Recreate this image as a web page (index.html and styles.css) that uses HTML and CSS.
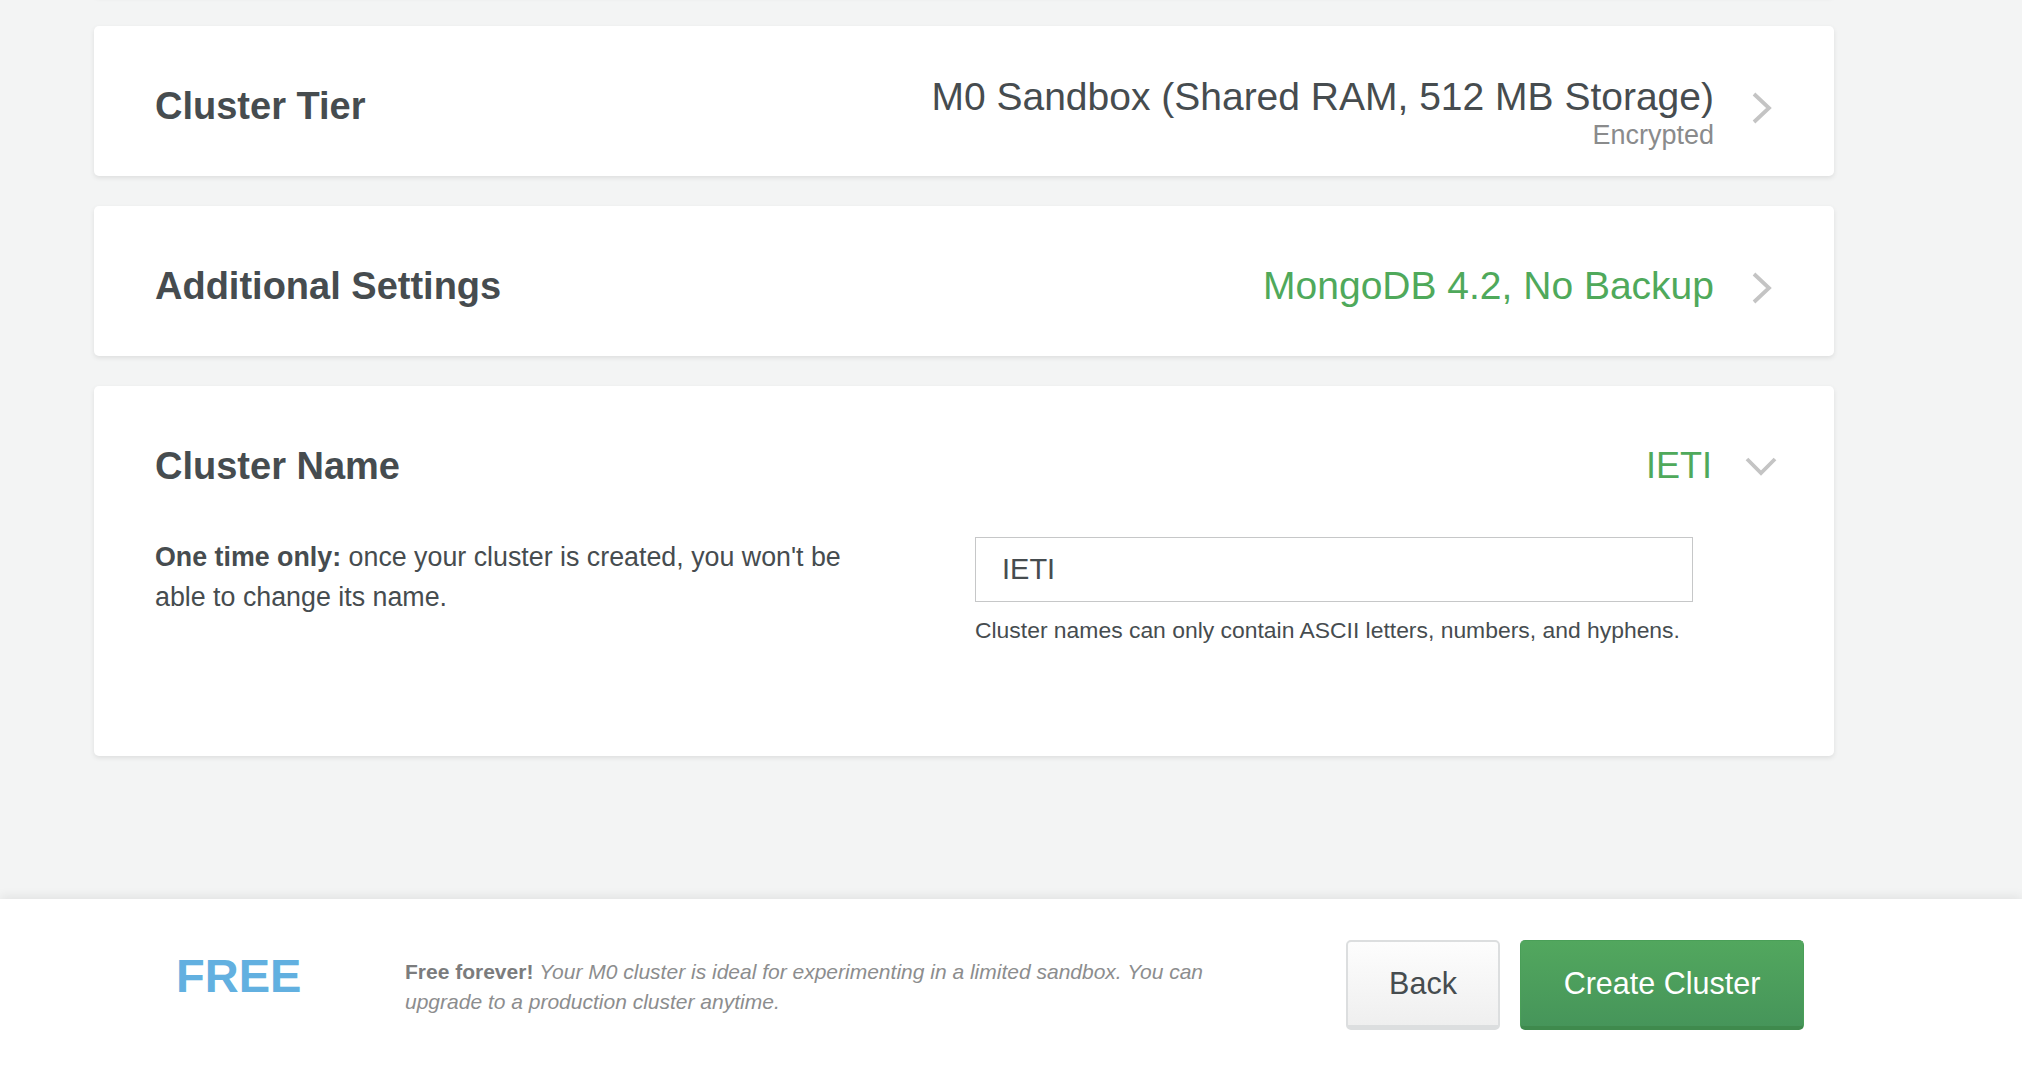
FILE: index.html
```html
<!DOCTYPE html>
<html lang="en">
<head>
<meta charset="utf-8">
<title>Create Cluster</title>
<link rel="stylesheet" href="styles.css">
</head>
<body>
<main class="content">
  <div class="card card-stub"></div>

  <section class="card">
    <div class="card-head">
      <h2 class="card-title">Cluster Tier</h2>
      <div class="value value-stack">
        <div class="value-main">M0 Sandbox (Shared RAM, 512 MB Storage)</div>
        <div class="value-sub">Encrypted</div>
      </div>
      <span class="chev chev-right">
        <svg width="22" height="34" viewBox="0 0 22 34"><polyline points="3,3 18,17 3,31" fill="none" stroke="#c4c4c4" stroke-width="3.8"/></svg>
      </span>
    </div>
  </section>

  <section class="card">
    <div class="card-head">
      <h2 class="card-title">Additional Settings</h2>
      <div class="value value-green">MongoDB 4.2, No Backup</div>
      <span class="chev chev-right">
        <svg width="22" height="34" viewBox="0 0 22 34"><polyline points="3,3 18,17 3,31" fill="none" stroke="#c4c4c4" stroke-width="3.8"/></svg>
      </span>
    </div>
  </section>

  <section class="card card-open">
    <div class="card-head">
      <h2 class="card-title">Cluster Name</h2>
      <div class="value value-green value-name">IETI</div>
      <span class="chev">
        <svg width="34" height="20" viewBox="0 0 34 20"><polyline points="3,3 17,17 31,3" fill="none" stroke="#c4c4c4" stroke-width="3.8"/></svg>
      </span>
    </div>
    <div class="card-body">
      <p class="note"><strong>One time only:</strong> once your cluster is created, you won't be able to change its name.</p>
      <div class="field">
        <input class="name-input" type="text" value="IETI">
        <p class="hint">Cluster names can only contain ASCII letters, numbers, and hyphens.</p>
      </div>
    </div>
  </section>
</main>

<footer class="footer">
  <div class="price">FREE</div>
  <p class="footer-text"><strong>Free forever!</strong> <em>Your M0 cluster is ideal for experimenting in a limited sandbox. You can upgrade to a production cluster anytime.</em></p>
  <div class="actions">
    <button class="btn btn-back" type="button">Back</button>
    <button class="btn btn-create" type="button">Create Cluster</button>
  </div>
</footer>
</body>
</html>
```

FILE: styles.css
```css
* {
  box-sizing: border-box;
}

html, body {
  margin: 0;
  padding: 0;
}

body {
  height: 1066px;
  overflow: hidden;
  display: flex;
  flex-direction: column;
  background: #f3f4f4;
  font-family: "Liberation Sans", Arial, Helvetica, sans-serif;
  color: #464c4f;
}

.content {
  flex: 1;
  display: flex;
  flex-direction: column;
  gap: 30px;
  padding: 0 188px 0 94px;
}

.card {
  background: #ffffff;
  border-radius: 5px;
  box-shadow: 0 2px 5px rgba(0, 0, 0, 0.09);
  padding: 56px 56px 46px 61px;
}

.card-stub {
  height: 10px;
  margin-top: -14px;
  padding: 0;
}

.card-head {
  display: flex;
  align-items: center;
  height: 48px;
}

.card-title {
  flex: 1;
  margin: 0;
  font-size: 38px;
  line-height: 48px;
  font-weight: 700;
  color: #464c4f;
}

.value {
  font-size: 39px;
  line-height: 48px;
  text-align: right;
  color: #464c4f;
}

.value-stack {
  align-self: flex-start;
  margin-top: -8px;
}

.value-main {
  line-height: 45px;
}

.value-sub {
  font-size: 27px;
  line-height: 32px;
  color: #8a8b8c;
}

.value-green {
  color: #4fa95b;
}

.value-name {
  font-size: 36px;
}

.chev {
  flex: 0 0 32px;
  margin-left: 32px;
  display: flex;
  align-items: center;
  justify-content: center;
}

.chev-right {
  padding-top: 3px;
}

.chev svg {
  display: block;
}

.card-open {
  padding-bottom: 111px;
}

.card-body {
  display: grid;
  grid-template-columns: 700px 718px;
  column-gap: 120px;
  margin-top: 47px;
}

.note {
  margin: 0;
  font-size: 26.8px;
  line-height: 40px;
  color: #464c4f;
}

.note strong {
  font-weight: 700;
}

.field {
  display: flex;
  flex-direction: column;
}

.name-input {
  height: 65px;
  width: 718px;
  margin: 0;
  padding: 0 26px;
  border: 1px solid #c6c7c8;
  border-radius: 0;
  background: #ffffff;
  font-family: "Liberation Sans", Arial, Helvetica, sans-serif;
  font-size: 29px;
  color: #464c4f;
  outline: none;
}

.hint {
  margin: 13px 0 0;
  font-size: 22.9px;
  line-height: 30px;
  color: #464c4f;
}

.footer {
  flex: 0 0 167px;
  height: 167px;
  display: flex;
  align-items: center;
  padding: 5px 218px 0 176px;
  background: #ffffff;
  box-shadow: 0 -3px 10px rgba(0, 0, 0, 0.07);
  position: relative;
}

.price {
  flex: 0 0 229px;
  margin-bottom: 20px;
  font-size: 47px;
  line-height: 1;
  font-weight: 700;
  color: #62b0e0;
}

.footer-text {
  flex: 0 0 830px;
  margin: 4px 0 0;
  font-size: 21px;
  line-height: 30px;
  color: #8c8d8e;
}

.footer-text strong {
  color: #7b7c7d;
  font-weight: 700;
}

.footer-text em {
  font-style: italic;
}

.actions {
  margin-left: auto;
  display: flex;
  gap: 20px;
}

.btn {
  height: 90px;
  border-radius: 5px;
  font-family: "Liberation Sans", Arial, Helvetica, sans-serif;
  font-size: 30.5px;
  cursor: pointer;
  padding: 0;
}

.btn-back {
  width: 154px;
  color: #464c4f;
  background: linear-gradient(#fdfdfd, #efefef);
  border: 2px solid #dcdedf;
  border-bottom-width: 5px;
}

.btn-create {
  width: 284px;
  color: #ffffff;
  background: linear-gradient(#52a75e, #46955a);
  border: 1px solid #4a9f58;
  border-bottom: 4px solid #3f8a4d;
}
```
